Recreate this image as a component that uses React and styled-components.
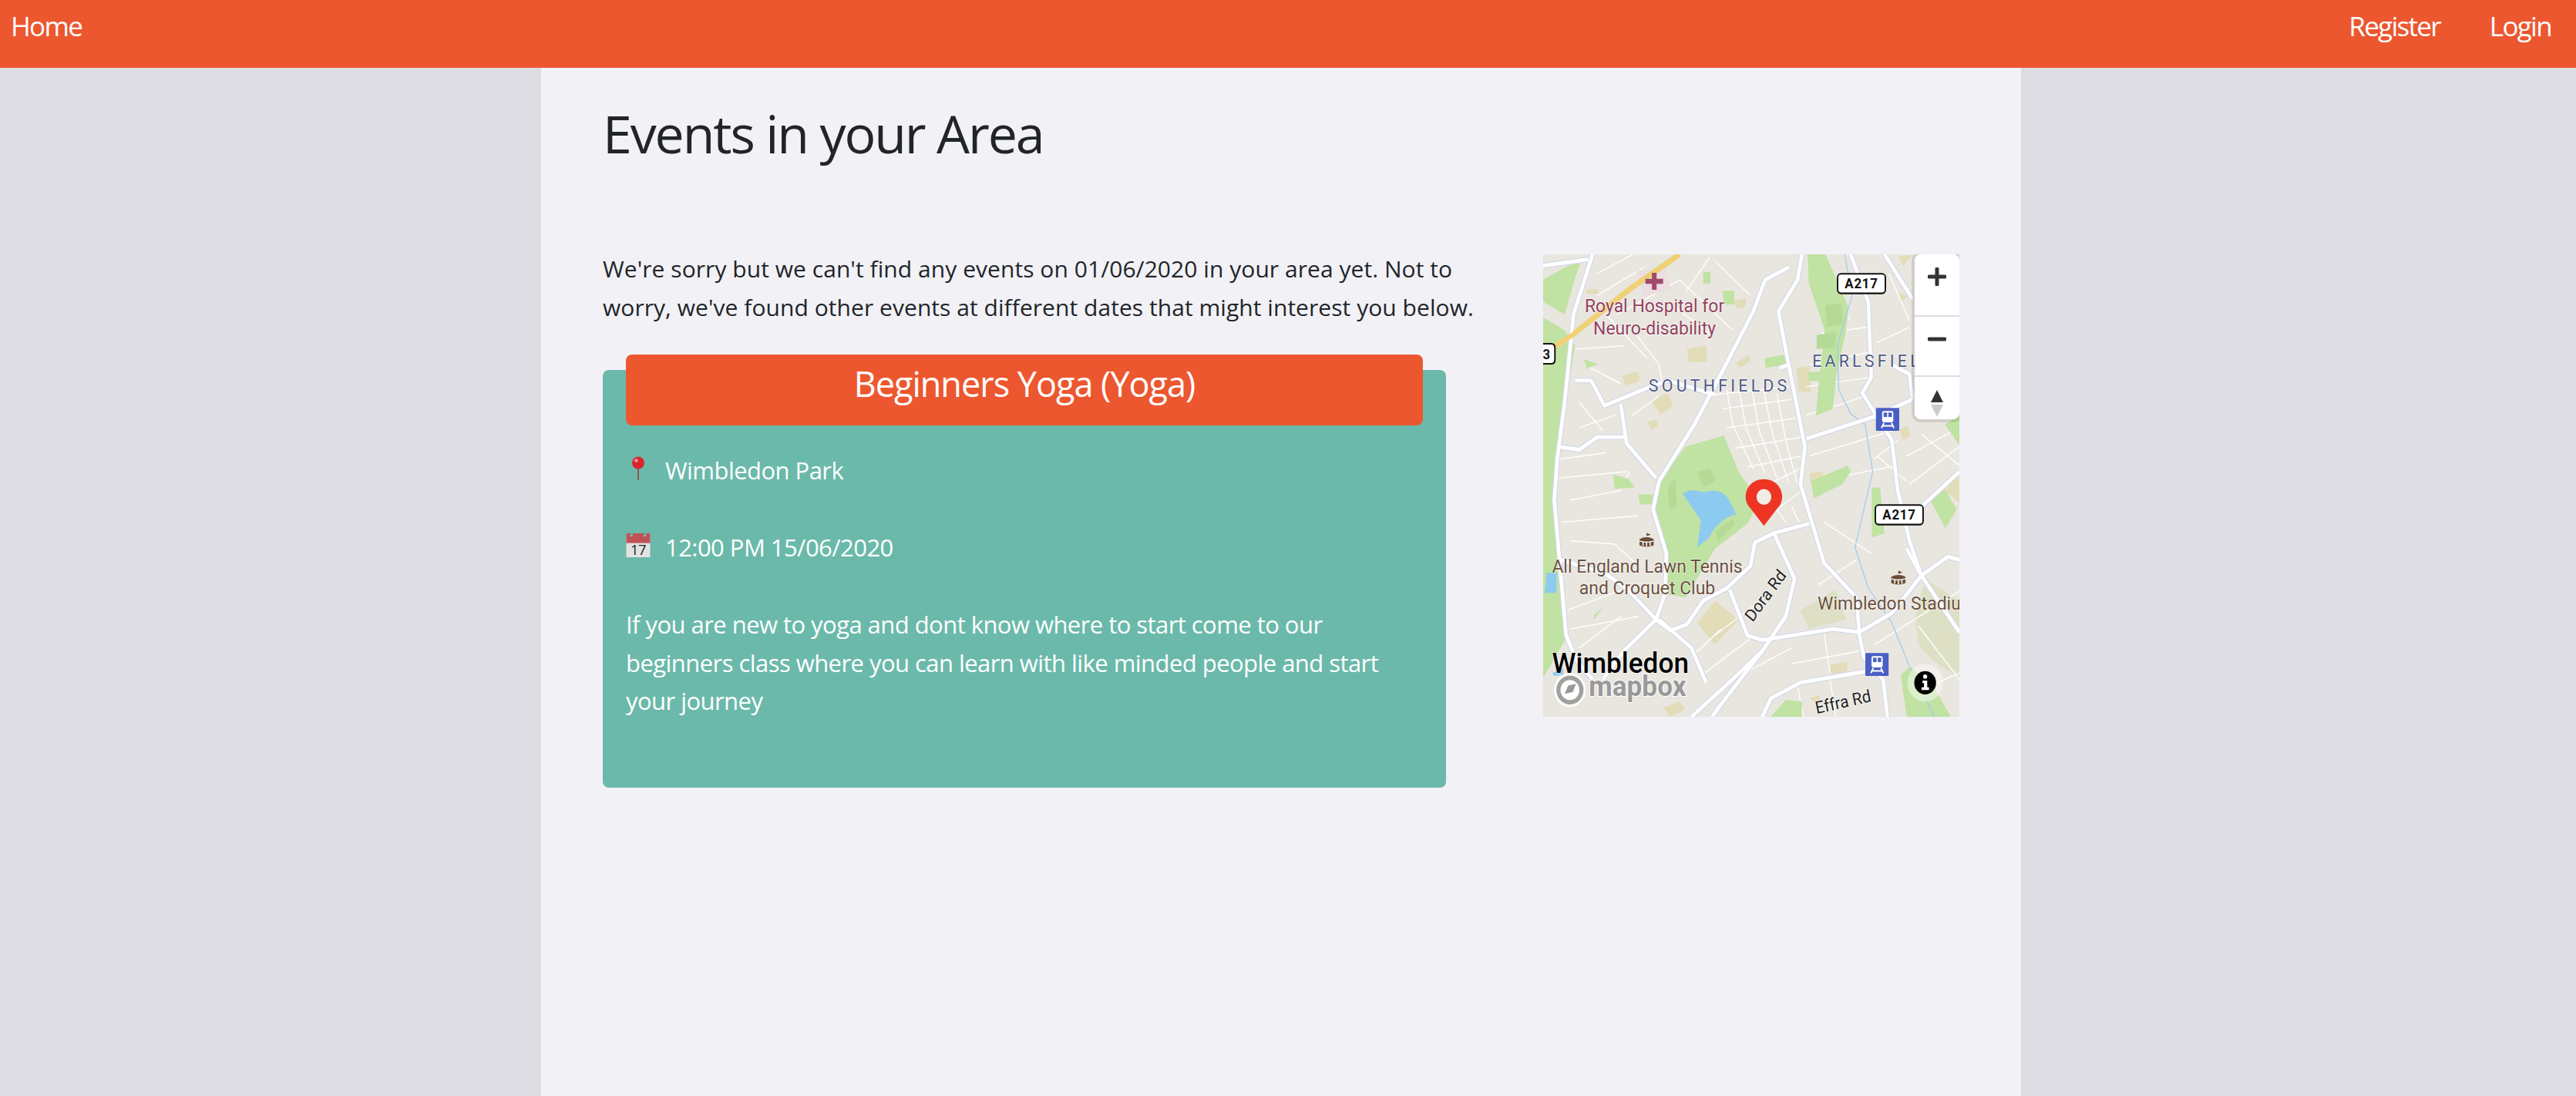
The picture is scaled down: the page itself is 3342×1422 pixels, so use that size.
import styled, { createGlobalStyle } from "styled-components";

const GlobalStyle = createGlobalStyle`
  html, body { margin: 0; padding: 0; }
  body {
    background: #dedce3;
    font-family: "Open Sans", "Noto Sans", sans-serif;
    color: #212529;
  }
`;

const parks = [
  "57,130 190,60 170,110 130,240 57,200",
  "57,250 130,290 165,340 125,560 100,700 92,830 120,1100 135,1270 57,1395",
  "540,660 670,625 720,740 790,835 750,905 640,985 540,1140 480,1130 478,1000 432,865 452,770",
  "955,49 1015,49 1092,215 1085,290 1052,430 1040,540 982,562 992,460 1012,290 958,140",
  "965,770 1090,720 1102,738 1072,780 975,825",
  "295,750 345,762 368,790 300,795",
  "1420,590 1469,560 1469,655",
  "1370,830 1420,795 1460,860 1422,920",
  "1270,1385 1302,1360 1380,1420 1440,1519 1290,1519",
  "830,1519 880,1465 935,1470 935,1519",
  "1172,790 1200,790 1215,935 1172,950",
  "230,1195 262,1170 228,1210",
  "380,812 430,812 425,844 385,844",
  "808,380 875,368 880,400 812,410",
  "665,165 705,165 705,208 672,208",
  "600,105 625,105 625,142 600,142",
  "195,382 245,398 205,412",
  "955,425 1005,420 1005,450 960,452",
];

const golfPatches = [
  "1015,210 1070,205 1075,270 1020,280",
  "985,305 1050,295 1048,345 985,350",
  "480,790 505,760 510,850 485,860",
  "640,930 700,890 705,910 650,960",
  "580,740 625,730 640,770 600,790",
];

const tans = [
  "205,160 245,160 245,175 205,175",
  "545,350 610,338 612,392 552,392",
  "325,435 380,420 385,452 335,468",
  "425,515 480,488 498,530 455,558",
  "712,395 752,368 762,385 728,410",
  "410,582 442,574 448,595 425,608",
  "705,195 745,188 742,218 712,220",
  "915,410 960,405 965,488 925,485",
  "960,745 1005,738 1010,775 965,782",
  "580,1220 640,1150 720,1210 640,1290",
  "1262,55 1310,50 1280,85",
  "1260,170 1295,180 1275,198",
  "1030,1355 1088,1345 1088,1378 1032,1382",
  "1265,605 1295,595 1302,625 1278,640",
  "1420,800 1469,740 1469,840",
  "960,1460 995,1450 995,1480",
  "60,745 95,745 95,830 62,830",
  "465,1490 520,1470 540,1495 490,1519",
];

const majorRoads = [
  "225,49 160,240 130,520 105,700 95,830 120,1100 135,1260 170,1340 225,1400",
  "935,49 920,130 855,230 890,400 945,660 930,780 1010,1030 1120,1140 1130,1260 1145,1330 1210,1400 1225,1519",
  "890,90 810,130 770,230 660,430 570,590 450,770 430,860 475,1000 470,1130 440,1210 330,1310 260,1400",
  "1100,49 1160,200 1170,440 1140,490 1240,640 1260,800 1300,960 1340,1070",
  "950,635 1180,565 1310,510",
  "165,450 220,450 265,530 420,470 480,450 640,495",
  "320,525 340,650 440,760",
  "960,905 840,935 775,965 760,1040 680,1110 600,1150 545,1225 490,1245 440,1210 340,1110 260,1060 115,1020",
  "840,935 910,1080 880,1200 800,1310 660,1480 630,1519",
  "690,1115 750,1260 800,1275 1040,1240 1130,1250 1240,1190 1340,1070 1430,1010 1469,1020",
  "800,1519 830,1460 930,1410 1150,1375",
  "1290,985 1340,1070 1469,1250",
  "1330,860 1469,740",
  "560,1519 700,1400 800,1310",
  "860,410 890,400",
  "450,1210 560,1300 610,1410",
  "1215,49 1310,190",
  "1310,510 1300,430 1240,400",
  "105,660 180,670 240,630 340,630",
  "57,85 210,65",
];

const minorRoads = [
  "680,480 700,590 770,730", "720,470 745,600 810,745", "765,475 790,610 850,760",
  "805,480 835,620 890,775", "850,490 880,640 920,780", "640,495 890,470",
  "665,540 900,510", "680,600 915,570", "710,665 935,630", "750,725 935,690",
  "800,790 930,730", "850,860 935,800", "880,900 850,860", "925,900 900,850",
  "240,110 360,50", "240,180 400,90", "310,240 520,130", "370,300 450,400 460,450",
  "480,200 620,300", "520,130 700,290", "640,70 760,180", "170,350 330,340",
  "200,400 320,460", "180,520 260,610", "110,700 270,680", "110,760 340,740",
  "120,900 380,880", "150,830 320,800 350,740", "150,960 300,970 380,1040",
  "140,1180 340,1110", "150,1240 380,1200", "180,1300 320,1200", "1000,120 1100,260",
  "1000,300 1160,280", "960,400 1165,360", "950,470 1165,440", "950,560 1150,500",
  "960,690 1240,610", "985,770 1260,720", "1180,700 1260,640", "1190,690 1290,770",
  "1290,690 1469,600", "1300,780 1469,660", "1340,620 1469,720", "1010,900 1170,1000",
  "990,1100 1120,1020", "900,1350 1130,1310", "1010,1250 1030,1380", "920,1420 940,1519",
  "1030,1400 1050,1519", "1370,1420 1469,1380", "640,1260 780,1160", "560,1330 660,1240",
  "700,1400 900,1300", "590,1390 760,1270", "180,600 300,560", "360,560 450,500",
  "270,240 410,380", "620,60 540,170", "1180,1290 1469,1120", "1330,1230 1469,1400",
  "1230,110 1300,260", "1190,330 1300,280",
];

const streams = [
  "1080,49 1105,180 1055,340 1060,480 1100,555 1150,590 1175,740 1115,980 1160,1110 1240,1220 1300,1360 1385,1519",
];

const stations = [
  [1186, 537],
  [1150, 1316],
];

function RoadShield({ x, y, label }) {
  return (
    <g>
      <rect x={x} y={y} width="162" height="62" rx="11" fill="#fff" stroke="#111" strokeWidth="5" />
      <text x={x + 81} y={y + 46} textAnchor="middle" fontSize="44" fontWeight="700" fill="#111" letterSpacing="2">
        {label}
      </text>
    </g>
  );
}

function Station({ x, y }) {
  return (
    <g transform={`translate(${x} ${y})`}>
      <rect width="79" height="73" rx="3" fill="#4a5fc4" />
      <rect x="21" y="10" width="38" height="36" rx="6" fill="#fff" />
      <rect x="26" y="15" width="12" height="14" fill="#4a5fc4" />
      <rect x="42" y="15" width="12" height="14" fill="#4a5fc4" />
      <path d="M27 48 L19 64 M53 48 L61 64 M22 57 H58" stroke="#fff" strokeWidth="5" fill="none" />
    </g>
  );
}

function Stadium({ x, y }) {
  return (
    <g transform={`translate(${x} ${y})`} fill="#6c4c38">
      <path d="M0 20 Q24 8 48 20 V40 Q24 50 0 40 Z" />
      <path d="M24 12 V0 L38 6 L26 10" />
      <path d="M12 28 V42 M24 28 V44 M36 28 V42" stroke="#fff" strokeWidth="4" />
      <path d="M0 26 Q24 34 48 26" stroke="#fff" strokeWidth="3" fill="none" />
    </g>
  );
}

function MapDrawing() {
  return (
    <MapSvg viewBox="57 49 1412 1470" preserveAspectRatio="none">
      <rect x="57" y="49" width="1412" height="1470" fill="#e9e6e0" />
      <path d="M1320 1200 Q1340 1110 1360 1085 L1469 1150 V1395 Q1380 1350 1330 1290 Z" fill="#dde0c4" />
      <path d="M930 1180 L1050 1115 L1085 1210 L960 1240 Z" fill="#dde0c4" />
      {tans.map((p) => (
        <polygon key={p} points={p} fill="#e3dcb9" />
      ))}
      {minorRoads.map((p) => (
        <polyline key={p} points={p} fill="none" stroke="#fff" strokeWidth="3.5" />
      ))}
      {parks.map((p) => (
        <polygon key={p} points={p} fill="#c0e2a2" />
      ))}
      {golfPatches.map((p) => (
        <polygon key={p} points={p} fill="#b4da96" />
      ))}
      <path d="M375 100 L470 95 L490 160 L395 185 Z" fill="#ecdde1" />
      <path d="M530 810 Q560 790 600 805 Q660 790 685 825 L712 875 Q650 890 620 950 L580 980 L592 895 Q560 850 530 810 Z" fill="#8ccbef" />
      <path d="M70 1060 L103 1062 L102 1125 L62 1125 Z" fill="#8ccbef" />
      <path d="M88 1380 L125 1365 L125 1385 L95 1390 Z" fill="#8ccbef" />
      {streams.map((p) => (
        <polyline key={p} points={p} fill="none" stroke="#9cc9ee" strokeWidth="3" />
      ))}
      {majorRoads.map((p) => (
        <polyline key={p} points={p} fill="none" stroke="#d3d8e8" strokeWidth="18" strokeLinejoin="round" />
      ))}
      <polyline points="57,365 150,310 350,160 520,49" fill="none" stroke="#e6d7a6" strokeWidth="19" />
      {majorRoads.map((p) => (
        <polyline key={p + "w"} points={p} fill="none" stroke="#fff" strokeWidth="12" strokeLinejoin="round" />
      ))}
      <polyline points="57,365 150,310 350,160 520,49" fill="none" stroke="#f0d070" strokeWidth="15" />
      <path d="M434 108 V162 M404 135 H464" stroke="#a04a6c" strokeWidth="16" />

      <MapLabel x="435" y="232" fill="#93405f" fontSize="60">Royal Hospital for</MapLabel>
      <MapLabel x="435" y="303" fill="#93405f" fontSize="60">Neuro-disability</MapLabel>
      <MapLabel x="655" y="484" fill="#4d5a85" fontSize="56" letterSpacing="11">SOUTHFIELDS</MapLabel>
      <MapLabel x="970" y="406" fill="#4d5a85" fontSize="56" letterSpacing="11" textAnchor="start">EARLSFIELD</MapLabel>
      <MapLabel x="410" y="1060" fill="#6b5040" fontSize="60">All England Lawn Tennis</MapLabel>
      <MapLabel x="410" y="1130" fill="#6b5040" fontSize="60">and Croquet Club</MapLabel>
      <MapLabel x="988" y="1178" fill="#6b5040" fontSize="60" textAnchor="start">Wimbledon Stadium</MapLabel>
      <MapLabel x="0" y="0" fill="#222" fontSize="54" transform="translate(826 1145) rotate(-52)">Dora Rd</MapLabel>
      <MapLabel x="0" y="0" fill="#222" fontSize="54" transform="translate(1078 1490) rotate(-12)">Effra Rd</MapLabel>
      <MapLabel x="87" y="1380" fill="#000" fontSize="92" textAnchor="start" fontWeight="500">Wimbledon</MapLabel>

      <RoadShield x={1056} y={111} label="A217" />
      <RoadShield x={1184} y={846} label="A217" />
      <path d="M57 333 H84 Q97 333 97 346 V384 Q97 397 84 397 H57" fill="#fff" stroke="#111" strokeWidth="5" />
      <text x="56" y="382" fontSize="44" fontWeight="700" fill="#111">3</text>

      {stations.map(([x, y]) => (
        <Station key={x} x={x} y={y} />
      ))}
      <Stadium x={384} y={934} />
      <Stadium x={1238} y={1054} />

      <path
        d="M806 764 C868 764 885 830 850 858 L806 912 L762 858 C727 830 744 764 806 764 Z"
        fill="#ee3524"
      />
      <circle cx="806" cy="820" r="25" fill="#f2ece6" />

      <circle cx="148" cy="1434" r="50" fill="#999" stroke="#fff" strokeWidth="8" opacity="0.9" />
      <circle cx="148" cy="1434" r="32" fill="#fff" />
      <path d="M130 1446 L142 1420 L168 1414 L158 1440 Z" fill="#999" />
      <MapLogoText x="212" y="1453">mapbox</MapLogoText>

      <circle cx="1353" cy="1411" r="60" fill="#fff" opacity="0.45" />
      <circle cx="1353" cy="1411" r="37" fill="#000" />
      <circle cx="1353" cy="1391" r="7" fill="#fff" />
      <path d="M1344 1404 H1360 V1425 H1366 V1434 H1341 V1425 H1349 V1412 H1344 Z" fill="#fff" />
    </MapSvg>
  );
}

function Pin() {
  return (
    <EventIcon viewBox="0 0 32 30">
      <path d="M16 14 V30" stroke="#8a5a50" strokeWidth="2" />
      <circle cx="16" cy="8" r="8" fill="#d9262e" />
      <circle cx="13.5" cy="5" r="2.2" fill="#f59aa0" />
    </EventIcon>
  );
}

function CalendarIcon() {
  return (
    <EventIcon viewBox="0 0 32 32">
      <rect width="32" height="32" fill="#e2e2e2" />
      <rect width="32" height="13" fill="#bf5257" />
      <circle cx="7" cy="2.5" r="2" fill="#7fb5ad" />
      <circle cx="25" cy="2.5" r="2" fill="#7fb5ad" />
      <CalendarDay x="16" y="29">17</CalendarDay>
    </EventIcon>
  );
}

export default function App() {
  return (
    <>
      <GlobalStyle />
      <Nav>
        <NavLink>Home</NavLink>
        <NavRight>
          <NavLink>Register</NavLink>
          <NavLink>Login</NavLink>
        </NavRight>
      </Nav>
      <Main>
        <Title>Events in your Area</Title>
        <Columns>
          <Left>
            <Sorry>
              We're sorry but we can't find any events on 01/06/2020 in your area yet. Not to worry, we've found other
              events at different dates that might interest you below.
            </Sorry>
            <Card>
              <CardTitle>Beginners Yoga (Yoga)</CardTitle>
              <CardBody>
                <InfoRow>
                  <Pin />
                  Wimbledon Park
                </InfoRow>
                <InfoRow>
                  <CalendarIcon />
                  12:00 PM 15/06/2020
                </InfoRow>
                <Description>
                  If you are new to yoga and dont know where to start come to our beginners class where you can learn
                  with like minded people and start your journey
                </Description>
              </CardBody>
            </Card>
          </Left>
          <MapBox>
            <MapDrawing />
            <Controls>
              <ControlButton $height={79}>
                <svg width="24" height="24" viewBox="0 0 24 24">
                  <path d="M12 2 V22 M2 12 H22" stroke="#333" strokeWidth="5" strokeLinecap="round" />
                </svg>
              </ControlButton>
              <ControlButton $height={78}>
                <svg width="24" height="24" viewBox="0 0 24 24">
                  <path d="M2 12 H22" stroke="#333" strokeWidth="5" strokeLinecap="round" />
                </svg>
              </ControlButton>
              <ControlButton $height={57}>
                <svg width="16" height="35" viewBox="0 0 16 35">
                  <path d="M8 0 L16 16 H0 Z" fill="#333" />
                  <path d="M8 35 L16 19 H0 Z" fill="#ccc" />
                </svg>
              </ControlButton>
            </Controls>
          </MapBox>
        </Columns>
      </Main>
    </>
  );
}

const Nav = styled.nav`
  height: 88px;
  background: #ec5730;
  display: flex;
  justify-content: space-between;
  padding: 10px 32px 0 14px;
  box-sizing: border-box;
`;
const NavRight = styled.div`
  display: flex;
  gap: 64px;
`;
const NavLink = styled.a`
  color: #fff;
  font-size: 35px;
  letter-spacing: -1.7px;
  line-height: 48px;
`;
const Main = styled.main`
  width: 1920px;
  min-height: 1334px;
  margin-left: 702px;
  padding: 0 80px;
  box-sizing: border-box;
  background: #f2f1f6;
`;
const Title = styled.h1`
  margin: 0;
  padding-top: 40px;
  height: 236px;
  box-sizing: border-box;
  font-size: 68px;
  letter-spacing: -2.1px;
  line-height: 90px;
  font-weight: 400;
  color: #212529;
`;
const Columns = styled.div`
  display: flex;
  justify-content: space-between;
  align-items: flex-start;
`;
const Left = styled.div`
  width: 1140px;
`;
const Sorry = styled.p`
  margin: 0 0 57px;
  font-size: 30px;
  letter-spacing: 0.05px;
  line-height: 49.5px;
  color: #212529;
`;
const Card = styled.section`
  width: 1094px;
  height: 542px;
  background: #6bb9aa;
  border-radius: 8px;
`;
const CardTitle = styled.h2`
  position: relative;
  top: -20px;
  margin: 0 30px -20px;
  height: 92px;
  box-sizing: border-box;
  background: #ec5730;
  border-radius: 8px;
  color: #fff;
  text-align: center;
  font-size: 45px;
  letter-spacing: -1px;
  line-height: 76px;
  font-weight: 400;
`;
const CardBody = styled.div`
  padding: 34px 30px 0;
  color: #fff;
  font-size: 31px;
  letter-spacing: -0.55px;
  line-height: 49.5px;
`;
const InfoRow = styled.div`
  display: flex;
  align-items: center;
  gap: 19px;
  height: 50px;
  margin-bottom: 50px;
`;
const EventIcon = styled.svg`
  width: 32px;
  height: 31px;
  flex: none;
  overflow: visible;
  position: relative;
  top: -4px;
`;
const CalendarDay = styled.text`
  font-size: 19px;
  text-anchor: middle;
  fill: #222;
`;
const Description = styled.p`
  margin: 0;
`;
const MapBox = styled.div`
  position: relative;
  width: 540px;
  height: 600px;
  margin-top: 6px;
  overflow: hidden;
`;
const MapSvg = styled.svg`
  display: block;
  width: 100%;
  height: 100%;
  font-family: Roboto, "Open Sans", sans-serif;
`;
const MapLabel = styled.text.attrs((props) => ({ textAnchor: props.textAnchor || "middle" }))`
  paint-order: stroke;
  stroke: rgba(255, 255, 255, 0.7);
  stroke-width: 4px;
`;
const MapLogoText = styled.text`
  font-size: 92px;
  font-weight: 700;
  fill: #999;
  stroke: #fff;
  stroke-width: 5px;
  paint-order: stroke;
`;
const Controls = styled.div`
  position: absolute;
  top: 0;
  right: 0;
  width: 58px;
  background: #fff;
  border-radius: 8px;
  box-shadow: 0 0 0 4px rgba(0, 0, 0, 0.1);
`;
const ControlButton = styled.div`
  height: ${(props) => props.$height}px;
  box-sizing: border-box;
  display: flex;
  justify-content: center;
  padding-top: 17px;
  & + & {
    border-top: 2px solid #ddd;
  }
`;
